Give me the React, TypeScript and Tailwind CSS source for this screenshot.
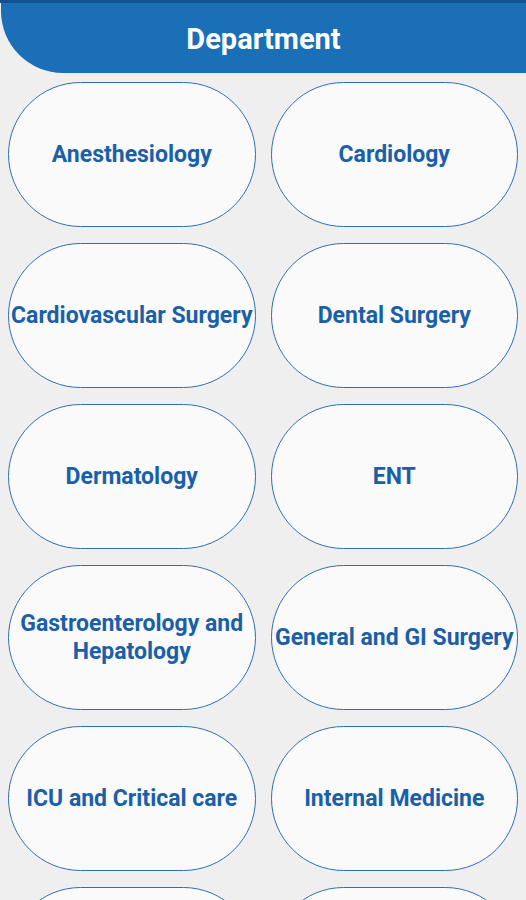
const departments = [
  'Anesthesiology',
  'Cardiology',
  'Cardiovascular Surgery',
  'Dental Surgery',
  'Dermatology',
  'ENT',
  'Gastroenterology and Hepatology',
  'General and GI Surgery',
  'ICU and Critical care',
  'Internal Medicine',
];

export default function App() {
  return (
    <div className="h-screen overflow-hidden bg-[#efefef] font-['Roboto',sans-serif]">
      <div className="border-t-[3px] border-[#13528f]">
        <header className="h-[70px] ml-[1px] pt-1 bg-[#1b6fb7] rounded-bl-[62px] flex items-center justify-center">
          <h1 className="text-white text-[29px] font-bold">Department</h1>
        </header>
      </div>

      <div className="grid grid-cols-2 gap-x-[15px] gap-y-4 px-2 pt-[9px]">
        {departments.map((name) => (
          <button
            key={name}
            className="h-[145px] rounded-full border border-[#2f6fb3] bg-[#fafafa] flex items-center justify-center text-center"
          >
            <span className="text-[#1a60a8] text-[23px] leading-7 font-bold -mx-2 px-1">
              {name}
            </span>
          </button>
        ))}
        {/* next row, only its top edge is on screen */}
        <div className="h-[145px] rounded-full border border-[#2f6fb3] bg-[#fafafa]" />
        <div className="h-[145px] rounded-full border border-[#2f6fb3] bg-[#fafafa]" />
      </div>
    </div>
  );
}
